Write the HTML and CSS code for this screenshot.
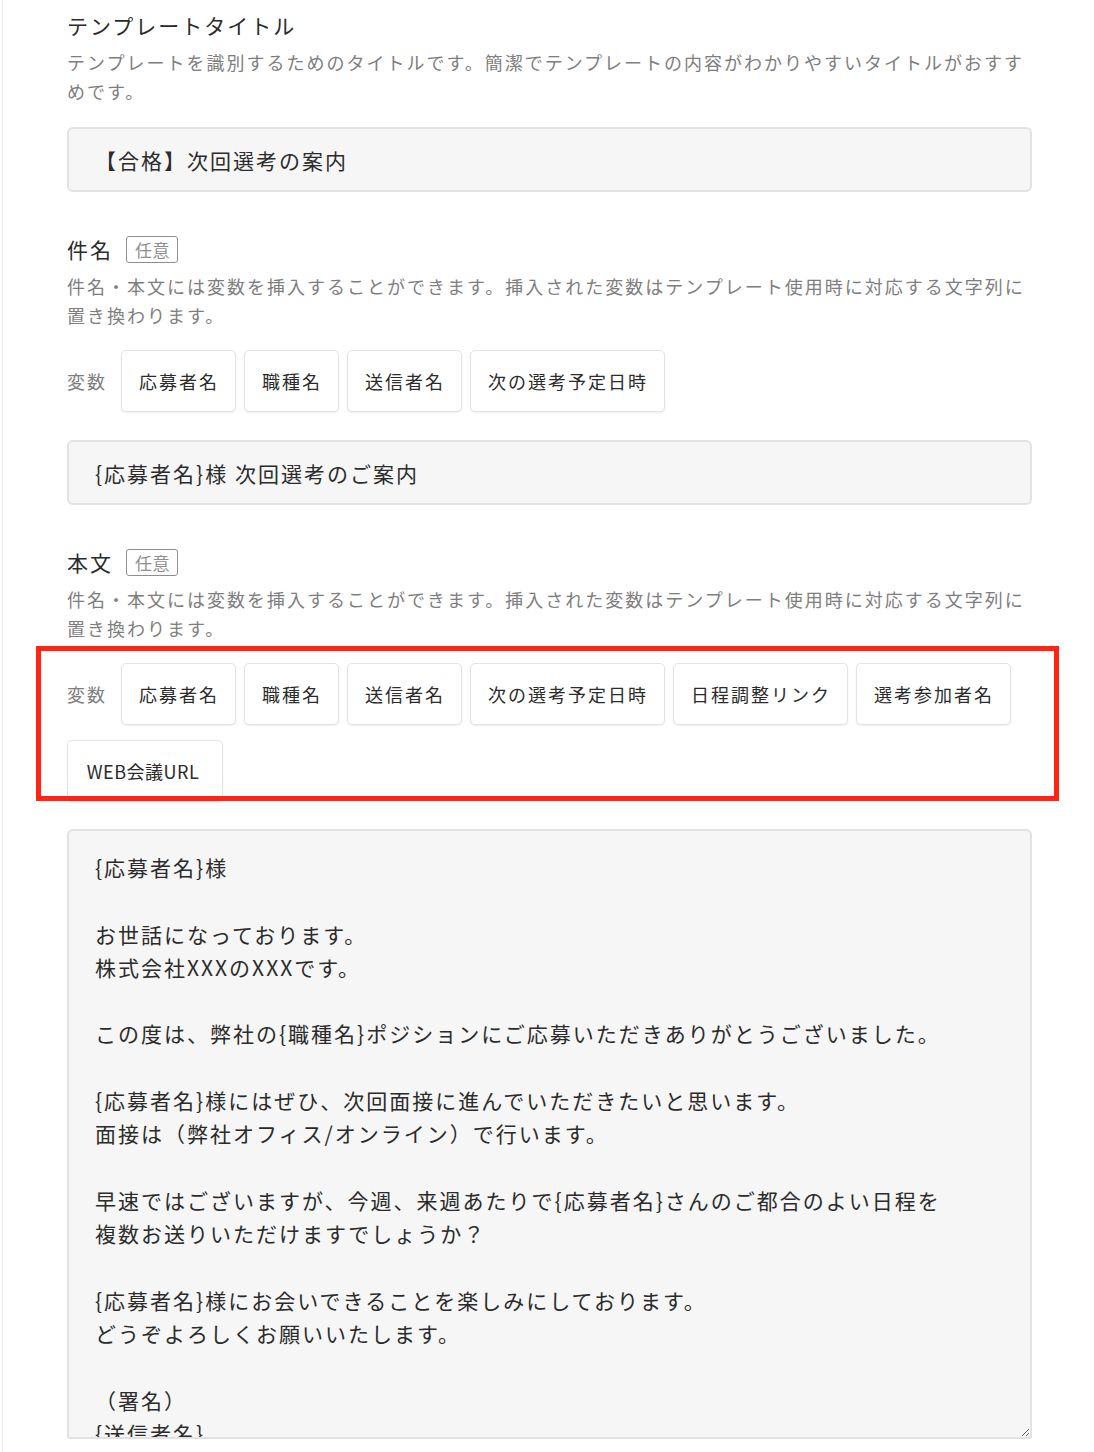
FILE: index.html
```html
<!DOCTYPE html>
<html lang="ja">
<head>
  <meta charset="UTF-8" />
  <meta name="viewport" content="width=device-width, initial-scale=1" />
  <title>テンプレート編集</title>
  <link rel="stylesheet" href="styles.css">
</head>
<body>

  <div class="page">
    <main class="form">

      <!-- Template title -->
      <section class="field first">
        <h2 class="field-title">テンプレートタイトル</h2>
        <p class="field-note">テンプレートを識別するためのタイトルです。簡潔でテンプレートの内容がわかりやすいタイトルがおすすめです。</p>
        <input class="text-input" type="text" value="【合格】次回選考の案内" />
      </section>

      <!-- Subject -->
      <section class="field">
        <h2 class="field-title">件名<span class="badge">任意</span></h2>
        <p class="field-note">件名・本文には変数を挿入することができます。挿入された変数はテンプレート使用時に対応する文字列に置き換わります。</p>
        <div class="vars">
          <span class="vars-label">変数</span>
          <button class="var-btn">応募者名</button>
          <button class="var-btn">職種名</button>
          <button class="var-btn">送信者名</button>
          <button class="var-btn">次の選考予定日時</button>
        </div>
        <input class="text-input narrow" type="text" value="{応募者名}様 次回選考のご案内" />
      </section>

      <!-- Body -->
      <section class="field">
        <h2 class="field-title">本文<span class="badge">任意</span></h2>
        <p class="field-note">件名・本文には変数を挿入することができます。挿入された変数はテンプレート使用時に対応する文字列に置き換わります。</p>
        <div class="vars">
          <span class="vars-label">変数</span>
          <button class="var-btn">応募者名</button>
          <button class="var-btn">職種名</button>
          <button class="var-btn">送信者名</button>
          <button class="var-btn">次の選考予定日時</button>
          <button class="var-btn">日程調整リンク</button>
          <button class="var-btn">選考参加者名</button>
          <button class="var-btn latin">WEB会議URL</button>
          <!-- annotation frame -->
          <div class="mark"></div>
        </div>
        <textarea class="body-input">{応募者名}様

お世話になっております。
株式会社XXXのXXXです。

この度は、弊社の{職種名}ポジションにご応募いただきありがとうございました。

{応募者名}様にはぜひ、次回面接に進んでいただきたいと思います。
面接は（弊社オフィス/オンライン）で行います。

早速ではございますが、今週、来週あたりで{応募者名}さんのご都合のよい日程を
複数お送りいただけますでしょうか？

{応募者名}様にお会いできることを楽しみにしております。
どうぞよろしくお願いいたします。

（署名）
{送信者名}</textarea>
      </section>

    </main>
  </div>

</body>
</html>
```

FILE: styles.css
```css
* {
  margin: 0; padding: 0; box-sizing: border-box;
}
body {
  font-family: "Noto Sans CJK JP", "Noto Sans", sans-serif;
  background: #fff;
  color: #2b2b2b;
}
.page {
  margin-left: 2px;
  border-left: 1px solid #ececec;
  min-height: 100vh;
}
.form {
  width: 965px;
  margin-left: 64px;
  padding-top: 10px;
}
.field {
  margin-top: 42px;
}
.field.first {
  margin-top: 0;
}
.field-title {
  font-size: 21px;
  font-weight: normal;
  letter-spacing: 2px;
  line-height: 30px;
  color: #2b2b2b;
  display: flex;
  align-items: center;
}
.badge {
  margin-left: 13px;
  border: 1.5px solid #8e8e8e;
  border-radius: 3px;
  color: #8e8e8e;
  font-size: 17px;
  letter-spacing: 0.5px;
  line-height: 25px;
  padding: 0 7px 0 8px;
}
.field-note {
  margin-top: 8px;
  font-size: 18px;
  letter-spacing: 2px;
  line-height: 29px;
  color: #7e7e7e;
}
.text-input {
  display: block;
  width: 100%;
  height: 65px;
  margin-top: 21px;
  padding: 0 26px;
  background: #f6f6f6;
  border: 2px solid #e2e2e2;
  border-radius: 6px;
  font-family: inherit;
  font-size: 21px;
  letter-spacing: 2px;
  color: #2b2b2b;
  outline: none;
}
.text-input.narrow {
  margin-top: 28px;
}
.vars {
  margin-top: 20px;
  display: flex;
  flex-wrap: wrap;
  align-items: center;
  column-gap: 8px;
  row-gap: 15px;
  position: relative;
}
.vars-label {
  font-size: 18px;
  letter-spacing: 2px;
  color: #7e7e7e;
  margin-right: 6px;
}
.var-btn {
  height: 62px;
  padding: 0 16px 0 17px;
  background: #fff;
  border: 1px solid #e3e3e3;
  border-radius: 5px;
  box-shadow: 0 1px 2px rgba(0, 0, 0, 0.07);
  font-family: inherit;
  font-size: 18px;
  letter-spacing: 2px;
  color: #2b2b2b;
  cursor: pointer;
}
.var-btn.latin {
  letter-spacing: 0.5px;
  padding: 0 21px 0 17px;
  min-width: 156px;
}
.mark {
  position: absolute;
  top: -17px;
  left: -31px;
  right: -27px;
  bottom: 1px;
  border: 5px solid #ff2414;
  pointer-events: none;
}
.body-input {
  display: block;
  width: 100%;
  height: 610px;
  margin-top: 27px;
  padding: 20px 26px;
  background: #f6f6f6;
  border: 2px solid #e2e2e2;
  border-radius: 6px 6px 2px 2px;
  font-family: inherit;
  font-size: 21px;
  letter-spacing: 2px;
  line-height: 33.3px;
  color: #2b2b2b;
  overflow: hidden;
  resize: vertical;
  outline: none;
}
```
